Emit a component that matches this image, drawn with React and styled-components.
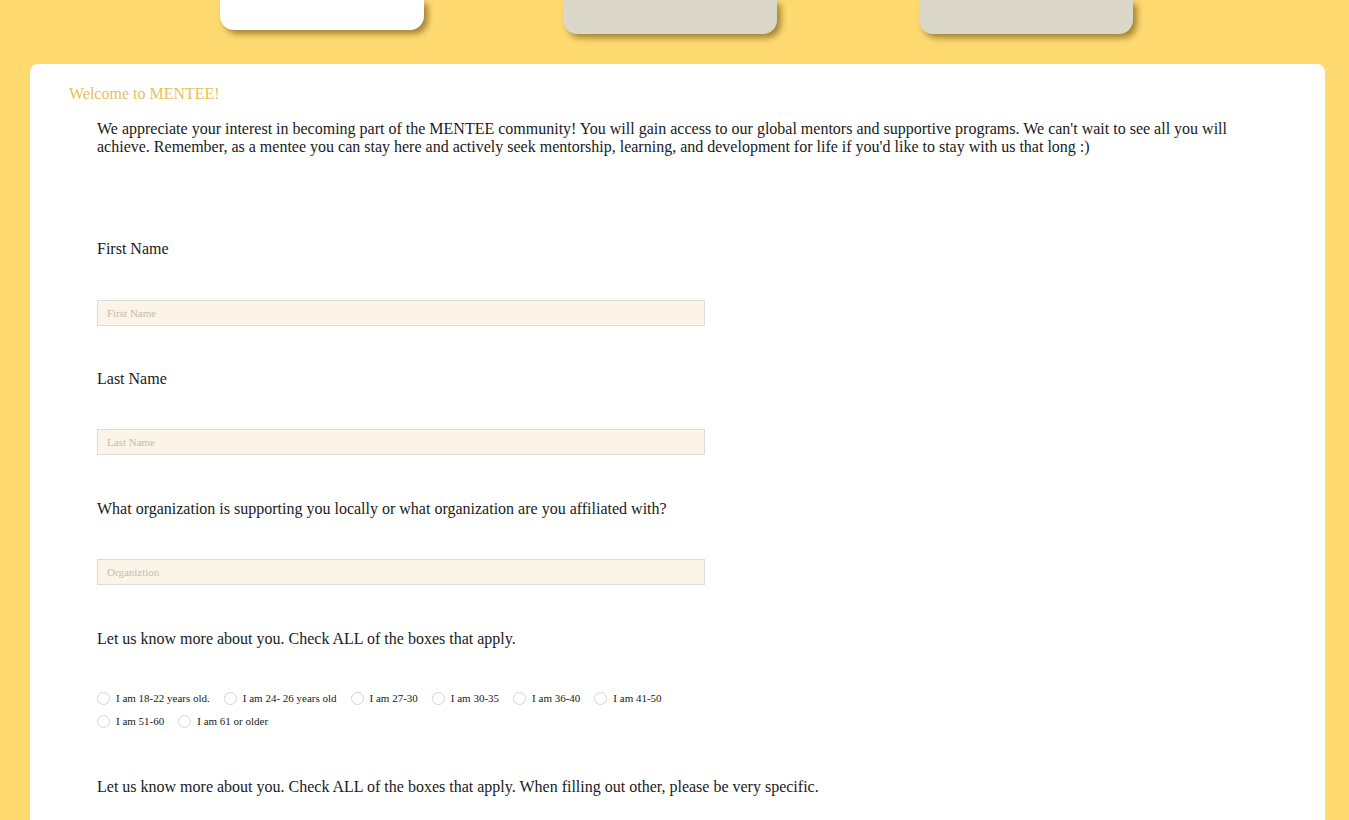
import React from "react";
import styled, { createGlobalStyle } from "styled-components";

const Global = createGlobalStyle`
  html, body { margin: 0; padding: 0; }
  body {
    background: #ffda70;
    font-family: "Liberation Serif", "Times New Roman", serif;
    color: #1a1a1a;
    overflow: hidden;
  }
`;

const Page = styled.div`
  min-height: 820px;
`;

const TabBar = styled.nav`
  display: flex;
  align-items: flex-start;
  height: 64px;
  padding-left: 220px;
`;

const Tab = styled.div`
  width: ${(p) => p.$w}px;
  height: ${(p) => (p.$active ? 30 : 34)}px;
  margin-right: ${(p) => p.$gap || 0}px;
  background: ${(p) => (p.$active ? "#ffffff" : "#dcd8c9")};
  border-radius: 0 0 14px 14px;
  box-shadow: 4px 4px 6px rgba(125, 95, 25, 0.7);
`;

const Card = styled.main`
  margin: 0 24px 0 30px;
  background: #ffffff;
  border-radius: 8px 8px 0 0;
  padding: 21px 67px 60px 39px;
  min-height: 700px;
`;

const Welcome = styled.h2`
  margin: 0;
  font-size: 16px;
  line-height: 18px;
  font-weight: normal;
  color: #e9bf57;
`;

const Intro = styled.p`
  margin: 17px 0 0 28px;
  font-size: 16px;
  line-height: 18px;
`;

const Form = styled.form`
  margin: 84px 0 0 28px;
  display: flex;
  flex-direction: column;
`;

const Field = styled.div`
  display: flex;
  flex-direction: column;
  margin-bottom: ${(p) => p.$after}px;
`;

const Label = styled.label`
  font-size: 16px;
  line-height: 18px;
  margin-bottom: ${(p) => p.$gap}px;
`;

const Input = styled.input`
  box-sizing: border-box;
  width: 608px;
  height: 26px;
  border: 1px solid #dcdcdc;
  background: #fcf4e7;
  padding: 0 9px;
  font-family: "Liberation Serif", "Times New Roman", serif;
  font-size: 11px;
  outline: none;
  &::placeholder { color: #c4bbb0; }
`;

const RadioGroup = styled.div`
  display: flex;
  flex-wrap: wrap;
  width: 608px;
  row-gap: 8px;
`;

const Option = styled.label`
  display: flex;
  align-items: center;
  height: 15px;
  margin-right: 14px;
  font-size: 11px;
  line-height: 15px;
  color: #1a1a1a;
`;

const Circle = styled.span`
  box-sizing: border-box;
  width: 13px;
  height: 13px;
  border: 1px solid #d4d4d4;
  border-radius: 50%;
  background: #fff;
  margin-right: 6px;
`;

const ages = [
  "I am 18-22 years old.",
  "I am 24- 26 years old",
  "I am 27-30",
  "I am 30-35",
  "I am 36-40",
  "I am 41-50",
  "I am 51-60",
  "I am 61 or older",
];

export default function App() {
  return (
    <Page>
      <Global />
      <TabBar>
        <Tab $active $w={204} $gap={139} />
        <Tab $w={214} $gap={142} />
        <Tab $w={214} />
      </TabBar>
      <Card>
        <Welcome>Welcome to MENTEE!</Welcome>
        <Intro>
          We appreciate your interest in becoming part of the MENTEE community! You will gain access to our global mentors and supportive programs. We can't wait to see all you will achieve. Remember, as a mentee you can stay here and actively seek mentorship, learning, and development for life if you'd like to stay with us that long :)
        </Intro>
        <Form>
          <Field $after={44}>
            <Label $gap={42}>First Name</Label>
            <Input placeholder="First Name" />
          </Field>
          <Field $after={45}>
            <Label $gap={41}>Last Name</Label>
            <Input placeholder="Last Name" />
          </Field>
          <Field $after={45}>
            <Label $gap={41}>What organization is supporting you locally or what organization are you affiliated with?</Label>
            <Input placeholder="Organiztion" />
          </Field>
          <Field $after={49}>
            <Label $gap={43}>Let us know more about you. Check ALL of the boxes that apply.</Label>
            <RadioGroup>
              {ages.map((a) => (
                <Option key={a}>
                  <Circle />
                  {a}
                </Option>
              ))}
            </RadioGroup>
          </Field>
          <Field $after={0}>
            <Label $gap={0}>Let us know more about you. Check ALL of the boxes that apply. When filling out other, please be very specific.</Label>
          </Field>
        </Form>
      </Card>
    </Page>
  );
}
